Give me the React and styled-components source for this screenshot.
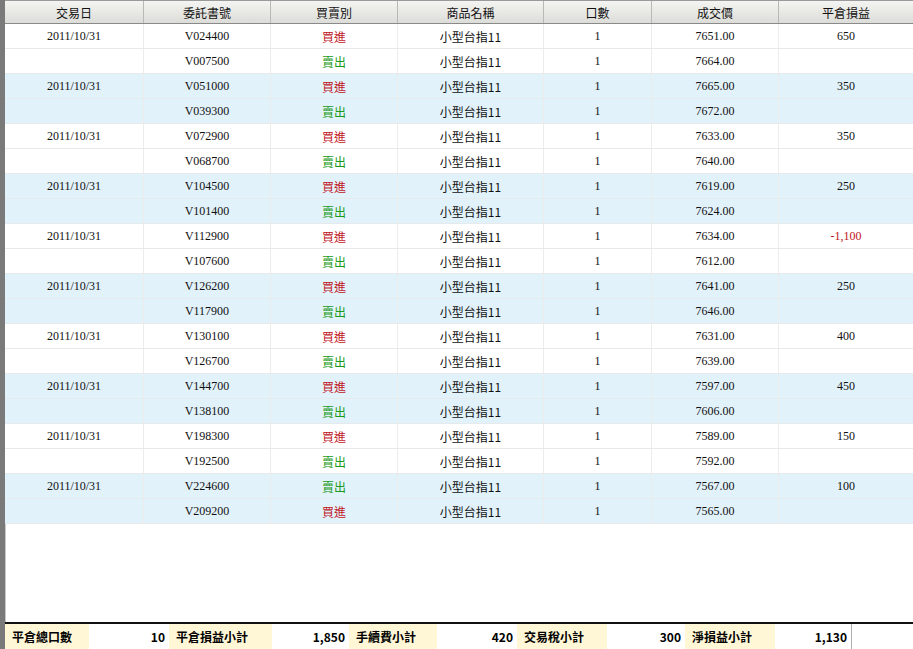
import React from "react";
import styled, { createGlobalStyle } from "styled-components";

const G = createGlobalStyle`
  html,body{margin:0;padding:0;background:#fff;}
  body{font-family:"Liberation Serif","Noto Sans CJK TC",serif;font-size:12px;color:#000;}
`;
const cols = [138, 127, 127, 146, 108, 127, 135];
const tpl = cols.map((c) => c + "px").join(" ");

const Frame = styled.div`
  width:913px;height:649px;box-sizing:border-box;
  border-left:5px solid #7a7a7a;box-shadow:inset 1px 0 0 #c8c8c8;
  display:flex;flex-direction:column;overflow:hidden;
`;
const Body = styled.div`flex:1;display:flex;flex-direction:column;`;
const Header = styled.div`
  display:grid;grid-template-columns:${tpl};height:24px;
  background:linear-gradient(#f4f4f2,#dcdcd8);border-top:1px solid #9a9a9a;border-bottom:1px solid #8a8a8a;box-sizing:border-box;
`;
const HCell = styled.div`
  display:flex;align-items:center;justify-content:center;border-left:${(p) => (p.$first ? "none" : "1px solid #b8b8b4")};
  font-family:"Noto Sans CJK TC",sans-serif;font-size:12px;color:#111;
`;
const Row = styled.div`
  display:grid;grid-template-columns:${tpl};height:25px;box-sizing:border-box;
  background:${(p) => (p.$alt ? "#e2f2fb" : "#fff")};border-bottom:1px solid #e6eaec;
`;
const Cell = styled.div`
  display:flex;align-items:center;justify-content:center;border-left:${(p) => (p.$first ? "none" : "1px solid #ececec")};
  color:${(p) => p.$c || "#111"};font-size:12px;
  font-family:${(p) => (p.$cjk ? '"Noto Sans CJK TC",sans-serif' : 'inherit')};
`;
const Footer = styled.div`
  height:25px;border-top:2px solid #111;display:grid;
  grid-template-columns:84px 80px 103px 77px 88px 80px 90px 78px 90px 77px 1fr;
  font-family:"Noto Sans CJK TC",sans-serif;font-weight:bold;font-size:12px;
`;
const FCell = styled.div`
  display:flex;align-items:center;padding:0 4px;
  justify-content:${(p) => (p.$label ? "flex-start" : "flex-end")};
  background:${(p) => (p.$label ? "#fff7d6" : "#fff")};
  padding-left:${(p) => (p.$label ? "7px" : "0")};
  border-right:${(p) => (p.$end ? "1px solid #b0b0b0" : "none")};
`;

const data = [
  ["V024400", 1, "7651.00", "650"], ["V007500", 0, "7664.00"],
  ["V051000", 1, "7665.00", "350"], ["V039300", 0, "7672.00"],
  ["V072900", 1, "7633.00", "350"], ["V068700", 0, "7640.00"],
  ["V104500", 1, "7619.00", "250"], ["V101400", 0, "7624.00"],
  ["V112900", 1, "7634.00", "-1,100"], ["V107600", 0, "7612.00"],
  ["V126200", 1, "7641.00", "250"], ["V117900", 0, "7646.00"],
  ["V130100", 1, "7631.00", "400"], ["V126700", 0, "7639.00"],
  ["V144700", 1, "7597.00", "450"], ["V138100", 0, "7606.00"],
  ["V198300", 1, "7589.00", "150"], ["V192500", 0, "7592.00"],
  ["V224600", 0, "7567.00", "100"], ["V209200", 1, "7565.00"],
];
const heads = ["交易日", "委託書號", "買賣別", "商品名稱", "口數", "成交價", "平倉損益"];
const foot = [["平倉總口數", "10"], ["平倉損益小計", "1,850"], ["手續費小計", "420"], ["交易稅小計", "300"], ["淨損益小計", "1,130"]];

export default function App() {
  return (
    <Frame>
      <G />
      <Body>
        <Header>{heads.map((h, i) => <HCell key={h} $first={i === 0}>{h}</HCell>)}</Header>
        {data.map((d, i) => (
          <Row key={d[0]} $alt={Math.floor(i / 2) % 2 === 1}>
            <Cell $first>{i % 2 === 0 ? "2011/10/31" : ""}</Cell>
            <Cell>{d[0]}</Cell>
            <Cell $cjk $c={d[1] ? "#c0141c" : "#1a9a1a"}>{d[1] ? "買進" : "賣出"}</Cell>
            <Cell $cjk>小型台指11</Cell>
            <Cell>1</Cell>
            <Cell>{d[2]}</Cell>
            <Cell $c={d[3] && d[3].startsWith("-") ? "#c0141c" : "#111"}>{d[3] || ""}</Cell>
          </Row>
        ))}
      </Body>
      <Footer>
        {foot.map(([l, v], i) => (
          <React.Fragment key={l}>
            <FCell $label>{l}</FCell>
            <FCell $end={i === 4}>{v}</FCell>
          </React.Fragment>
        ))}
        <FCell />
      </Footer>
    </Frame>
  );
}
